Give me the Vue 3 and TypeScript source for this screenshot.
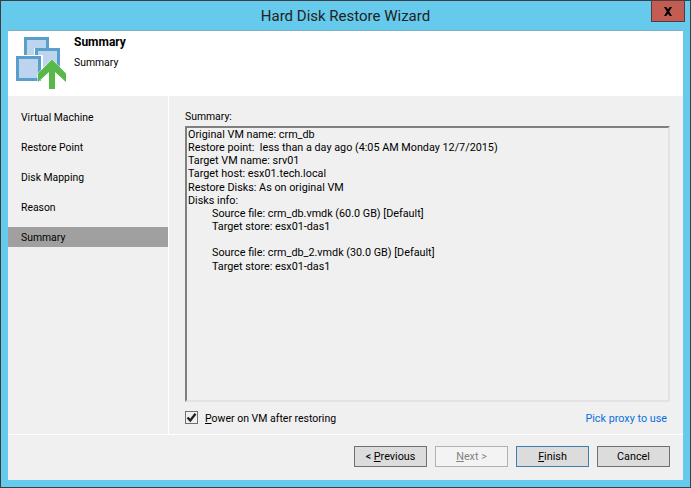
<script setup lang="ts">
import { ref } from 'vue'
const steps = ['Virtual Machine', 'Restore Point', 'Disk Mapping', 'Reason', 'Summary']
const active = 'Summary'
const powerOn = ref(true)
const lines = [
  { text: 'Original VM name: crm_db', indent: false },
  { text: 'Restore point:  less than a day ago (4:05 AM Monday 12/7/2015)', indent: false },
  { text: 'Target VM name: srv01', indent: false },
  { text: 'Target host: esx01.tech.local', indent: false },
  { text: 'Restore Disks: As on original VM', indent: false },
  { text: 'Disks info:', indent: false },
  { text: 'Source file: crm_db.vmdk (60.0 GB) [Default]', indent: true },
  { text: 'Target store: esx01-das1', indent: true },
  { text: '\u00a0', indent: true },
  { text: 'Source file: crm_db_2.vmdk (30.0 GB) [Default]', indent: true },
  { text: 'Target store: esx01-das1', indent: true }
]
</script>

<template>
  <div class="window">
    <div class="titlebar">
      <span class="title">Hard Disk Restore Wizard</span>
      <button class="close" type="button" aria-label="Close">
        <svg width="10" height="9" viewBox="0 0 10 9"><path d="M1 0h2.200L5 2.200 6.800 0H9L6.200 4.500 9 9H6.800L5 6.800 3.200 9H1l2.800-4.500z" fill="#000"/></svg>
      </button>
    </div>
    <div class="client">
      <header class="head">
        <svg class="logo" width="50" height="52" viewBox="0 0 50 52">
          <rect x="9.500" y="1.500" width="22" height="22" fill="#bcd4ee" stroke="#5a9fc9" stroke-width="3"/>
          <rect x="18" y="11" width="27" height="27" fill="#fff"/>
          <rect x="20.500" y="12.500" width="22" height="22" fill="#bcd4ee" stroke="#5a9fc9" stroke-width="3"/>
          <rect x="0" y="18" width="27" height="27" fill="#fff"/>
          <rect x="1.500" y="20.500" width="22" height="22" fill="#bcd4ee" stroke="#5a9fc9" stroke-width="3"/>
          <path d="M36 22.500 50 36.500V45L39 35V52H33V35L22 45V36.500Z" fill="#59b948" stroke="#fff" stroke-width="1" paint-order="stroke"/>
        </svg>
        <div class="head-text">
          <div class="head-title">Summary</div>
          <div class="head-sub">Summary</div>
        </div>
      </header>
      <div class="middle">
        <nav class="side">
          <div v-for="s in steps" :key="s" class="step" :class="{ on: s === active }">{{ s }}</div>
        </nav>
        <main class="main">
          <div class="label">Summary:</div>
          <div class="box">
            <div v-for="(l, i) in lines" :key="i" class="line" :class="{ indent: l.indent }">{{ l.text }}</div>
          </div>
          <div class="options">
            <label class="check">
              <span class="checkbox" @click.prevent="powerOn = !powerOn">
                <svg v-if="powerOn" width="11" height="11" viewBox="0 0 11 11"><path d="M1.500 5.500 4.300 8.500 9.500 1.800" fill="none" stroke="#222" stroke-width="2.400"/></svg>
              </span>
              <span class="check-text"><u>P</u>ower on VM after restoring</span>
            </label>
            <a class="link" href="#" @click.prevent>Pick proxy to use</a>
          </div>
        </main>
      </div>
      <footer class="foot">
        <button class="btn" type="button">&lt; <u>P</u>revious</button>
        <button class="btn disabled" type="button"><u>N</u>ext &gt;</button>
        <button class="btn primary" type="button"><u>F</u>inish</button>
        <button class="btn" type="button">Cancel</button>
      </footer>
    </div>
  </div>
</template>

<style>
html, body { margin: 0; padding: 0; background: #65caeb; }
</style>

<style scoped>
.window {
  width: 691px;
  height: 488px;
  box-sizing: border-box;
  border: 1px solid #3a3f42;
  background: #65caeb;
  padding: 0 7px 7px;
  display: flex;
  flex-direction: column;
  font-family: Roboto, "Open Sans", sans-serif;
  font-size: 10.800px;
  color: #000;
  position: relative;
}
.titlebar {
  height: 29px;
  flex: none;
  display: flex;
  align-items: center;
  justify-content: center;
}
.title { font-size: 15px; color: #222; }
.close {
  position: absolute;
  top: -1px;
  right: 5px;
  width: 34px;
  height: 22px;
  padding: 0;
  box-sizing: border-box;
  background: #c35c53;
  border: 1px solid #553c3c;
  display: flex;
  align-items: center;
  justify-content: center;
}
.client {
  flex: 1;
  min-height: 0;
  display: flex;
  flex-direction: column;
  background: #f0f0f0;
  border-top: 1px solid #7fb0c6;
}
.head {
  height: 65px;
  flex: none;
  background: #fff;
  display: flex;
}
.logo { margin: 6px 0 0 8px; flex: none; }
.head-text { margin: 4px 0 0 8px; }
.head-title { font-weight: 700; font-size: 12px; line-height: 15px; }
.head-sub { margin-top: 5px; font-size: 10.400px; line-height: 15px; }
.middle { flex: 1; min-height: 0; display: flex; border-bottom: 1px solid #fff; }
.side {
  width: 160px;
  flex: none;
  border-right: 1px solid #fff;
  padding-top: 11px;
  font-size: 10.400px;
}
.step { height: 20px; line-height: 21px; padding-left: 13px; margin-bottom: 10px; }
.step.on { background: #a0a0a0; }
.main {
  flex: 1;
  min-width: 0;
  padding: 12px 13px 0 16px;
  display: flex;
  flex-direction: column;
}
.label { line-height: 17px; height: 18px; font-size: 10.400px; }
.box {
  height: 276px;
  flex: none;
  box-sizing: border-box;
  border-style: solid;
  border-color: #808080 #e3e3e3 #e3e3e3 #808080;
  border-width: 2px;
  padding: 0 1px;
}
.line { line-height: 13.150px; white-space: pre; }
.line.indent { padding-left: 24px; }
.options {
  display: flex;
  justify-content: space-between;
  align-items: center;
  margin-top: 8px;
  font-size: 10.500px;
}
.check { display: flex; align-items: center; gap: 7px; }
.check-text { padding-top: 2px; }
.checkbox {
  width: 13px;
  height: 13px;
  box-sizing: border-box;
  border: 1px solid #707070;
  background: #f0f0f0;
  display: flex;
  align-items: center;
  justify-content: center;
}
.link { color: #0a6fe0; text-decoration: none; margin-right: 3px; font-size: 10.800px; padding-top: 2px; }
.foot {
  height: 45px;
  flex: none;
  box-sizing: border-box;
  display: flex;
  justify-content: flex-end;
  gap: 8px;
  padding: 11px 13px 0 0;
}
.btn {
  width: 73px;
  height: 21px;
  padding: 0;
  box-sizing: border-box;
  background: #dcdcdc;
  border: 1px solid #707070;
  font: inherit;
  color: #000;
}
.btn.disabled { background: #f3f3f3; border-color: #adb2b5; color: #838383; }
.btn.primary { border-color: #3c7fb1; }
</style>
